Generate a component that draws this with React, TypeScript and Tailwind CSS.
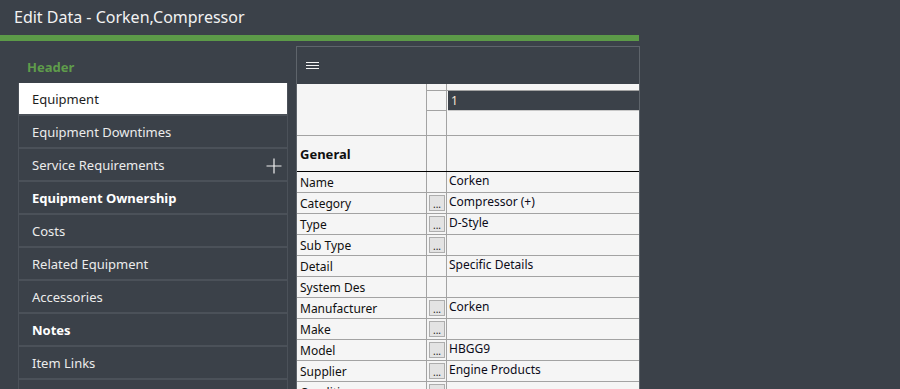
import React from 'react';

const navItems = [
  { label: 'Equipment', selected: true },
  { label: 'Equipment Downtimes' },
  { label: 'Service Requirements', plus: true },
  { label: 'Equipment Ownership', bold: true },
  { label: 'Costs' },
  { label: 'Related Equipment' },
  { label: 'Accessories' },
  { label: 'Notes', bold: true },
  { label: 'Item Links' },
  { label: '' },
];

const rows = [
  { label: 'Name', value: 'Corken', btn: false },
  { label: 'Category', value: 'Compressor (+)', btn: true },
  { label: 'Type', value: 'D-Style', btn: true },
  { label: 'Sub Type', value: '', btn: true },
  { label: 'Detail', value: 'Specific Details', btn: false },
  { label: 'System Des', value: '', btn: false },
  { label: 'Manufacturer', value: 'Corken', btn: true },
  { label: 'Make', value: '', btn: true },
  { label: 'Model', value: 'HBGG9', btn: true },
  { label: 'Supplier', value: 'Engine Products', btn: true },
  { label: 'Condition', value: '', btn: true },
];

function EllipsisButton() {
  return (
    <div className="mt-[2px] ml-[2px] w-[16px] h-[16px] bg-[#e3e3e3] border border-[#adadad] flex items-end justify-center text-[10px] leading-[10px] text-[#222] pb-[1px]">
      ...
    </div>
  );
}

export default function App() {
  return (
    <div
      className="w-[900px] h-[389px] overflow-hidden bg-[#3b4149] text-white"
      style={{ fontFamily: '"Noto Sans", "Open Sans", sans-serif' }}
    >
      {/* title bar */}
      <div className="h-[35px] flex items-center pl-[14px] text-[16px] text-[#f2f2f2] pb-[1px]">
        Edit Data - Corken,Compressor
      </div>
      <div className="w-[639px] h-[6px] bg-[#5c9a48]" />

      <div className="flex w-[640px]">
        {/* sidebar */}
        <div className="w-[296px] pl-[18px] pr-[8px] shrink-0">
          <div className="h-[42px] flex items-end pb-[6px] pl-[9px] text-[13px] font-bold text-[#5f9c4b]">
            Header
          </div>
          {navItems.map((item, i) => (
            <div
              key={i}
              className={
                'relative h-[33px] flex items-center pl-[13px] pt-[2px] text-[13px] border-x border-b-2 border-[#4b5159] ' +
                (item.selected ? 'bg-white text-[#1d1d1d]' : 'text-[#ececec]') +
                (item.bold ? ' font-bold text-white' : '')
              }
            >
              {item.label}
              {item.plus && (
                <svg className="absolute right-[5px] top-[9px]" width="16" height="16" viewBox="0 0 16 16">
                  <path d="M8 0.5V15.5M0.5 8H15.5" stroke="#f0f0f0" strokeWidth="1.2" />
                </svg>
              )}
            </div>
          ))}
        </div>

        {/* grid panel */}
        <div className="flex-1 mt-[5px] border-t border-l border-r border-[#5e646b] h-[400px]">
          <div className="h-[37px] flex items-center pl-[9px]">
            <svg width="14" height="8" viewBox="0 0 14 8">
              <path d="M0 0.5H13M0 3.5H13M0 6.5H13" stroke="#f4f4f4" strokeWidth="1" />
            </svg>
          </div>
          <div className="bg-[#f5f5f5] text-[12px] text-[#101010]">
            {/* column header block */}
            <div className="flex h-[52px] border-b border-[#a3a3a3]">
              <div className="w-[130px] border-r border-[#a3a3a3]" />
              <div className="w-[20px] border-r border-[#a3a3a3] flex flex-col">
                <div className="h-[7px] border-b border-[#a3a3a3]" />
                <div className="h-[20px] border-b border-[#a3a3a3]" />
              </div>
              <div className="flex-1 flex flex-col">
                <div className="h-[7px] border-b border-[#a3a3a3]" />
                <div className="h-[20px] border-b border-[#c8c8c8] bg-[#3b4149] ml-[1px] text-[#f4e6d6] pl-[3px] flex items-center">
                  1
                </div>
              </div>
            </div>
            {/* General */}
            <div className="flex h-[36px] border-b border-black">
              <div className="w-[130px] border-r border-[#a3a3a3] flex items-center pl-[3px] pt-[2px] text-[13px] font-bold">
                General
              </div>
              <div className="w-[20px] border-r border-[#a3a3a3]" />
              <div className="flex-1" />
            </div>
            {rows.map((r) => (
              <div key={r.label} className="flex h-[21px] border-b border-[#a3a3a3]">
                <div className="w-[130px] border-r border-[#a3a3a3] pl-[3px] flex items-center pt-[1px]">
                  {r.label}
                </div>
                <div className="w-[20px] border-r border-[#a3a3a3]">{r.btn && <EllipsisButton />}</div>
                <div className="flex-1 pl-[2px] text-[#0c0c1a] leading-[18px]">{r.value}</div>
              </div>
            ))}
          </div>
        </div>
      </div>
    </div>
  );
}
